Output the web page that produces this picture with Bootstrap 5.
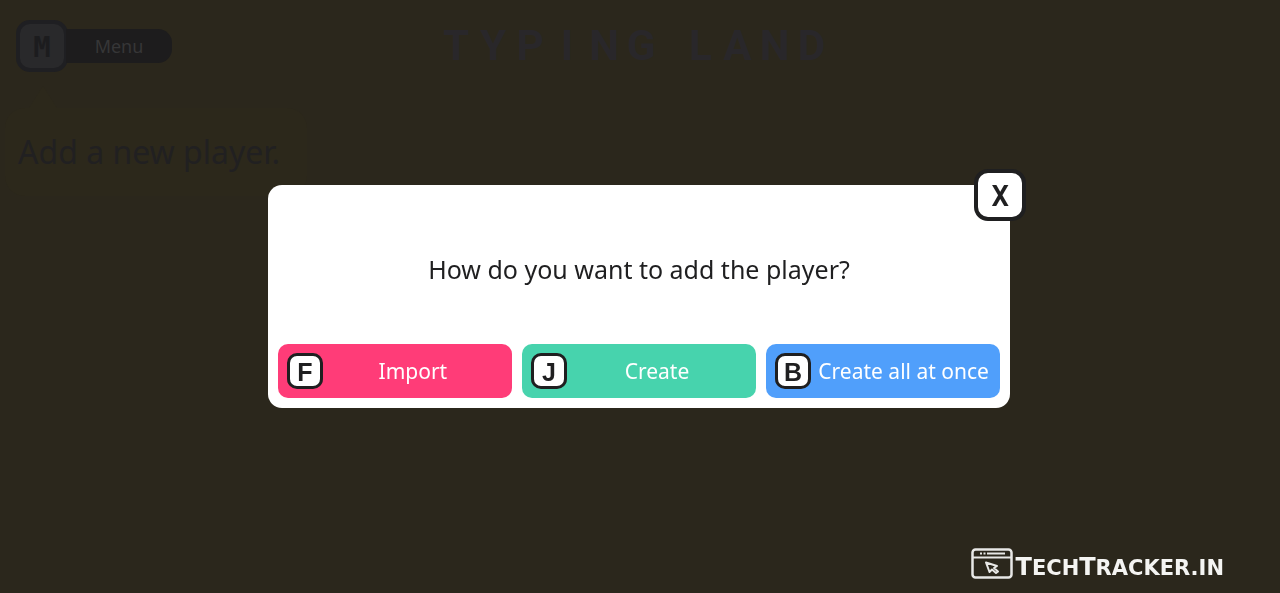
<!DOCTYPE html>
<html lang="en">
<head>
<meta charset="utf-8">
<meta name="viewport" content="width=device-width, initial-scale=1">
<title>Typing Land</title>
<link href="https://cdn.jsdelivr.net/npm/bootstrap@5.3.0/dist/css/bootstrap.min.css" rel="stylesheet">
<style>
  body { background: #2b271c; color: #1f1f20; font-family: "Noto Sans", sans-serif; min-height: 100vh; overflow: hidden; }
  .topbar { display: grid; grid-template-columns: 1fr auto 1fr; align-items: center; padding: 20px 28px 0 16px; }
  .keycap { display: inline-flex; align-items: center; justify-content: center; flex: none; width: 36px; height: 36px; padding: 2px 0 0; border: 3px solid #1f1f20; border-radius: 10px; background: #fff; color: #1f1f20; font: 700 25px/1 "Liberation Sans", sans-serif; }
  .keycap-lg { width: 52px; height: 52px; border-width: 4px; border-radius: 14px; font: 700 29px/1 "DejaVu Sans Mono", monospace; }
  .menu-btn { border: 0; padding: 0; background: none; }
  .menu-btn .keycap { background: #29292b; border-color: #1f1f22; color: #1c1c1e; }
  .menu-label { height: 34px; width: 106px; margin-left: -2px; border-radius: 0 14px 14px 0; background: #1d1c1d; color: #363637; font-size: 18px; line-height: 34px; }
  .brand { margin: 0; font: 700 42px/52px Roboto, sans-serif; color: #29272a; }
  .brand span { display: inline-block; width: 37px; text-align: center; }
  .brand .word-start { margin-left: 12px; }
  .hint { position: relative; width: 302px; margin: 36px 0 0 5px; padding: 20px 0 20px 13px; border-radius: 20px; background: #2c281b; color: #212021; font-size: 32px; line-height: 48px; }
  .hint::before { content: ""; position: absolute; left: 24px; bottom: 100%; border: 14px solid transparent; border-top: 0; border-bottom: 22px solid #2c281b; }
  .overlay { padding: 0 2px 0 0; }
  .dialog-box { width: 58vw; min-width: 720px; border-radius: 14px; background: #fff; padding: 10px; }
  .question { margin: 0; padding: 56px 0 57px; font-size: 25px; line-height: 36px; }
  .choices { display: grid; grid-template-columns: repeat(3, 1fr); gap: 10px; }
  .choice { height: 54px; border: 0; border-radius: 10px; padding: 0 9px; color: #fff; font-size: 21px; line-height: 32px; white-space: nowrap; }
  .choice-wide { padding-right: 4px; }
  .c-import { background: #ff3c78; } .c-create { background: #47d3ad; } .c-all { background: #509ffb; }
  .close-key { position: absolute; top: -16px; right: -16px; }
  .credit { position: fixed; right: 56px; bottom: 13px; gap: 2px; color: #f4f4f2; text-decoration: none; font: 700 21px/24px "DejaVu Sans", sans-serif; }
  .credit b { font-size: 24px; }
</style>
</head>
<body>
<header class="topbar">
  <button class="menu-btn d-flex align-items-center" type="button">
    <kbd class="keycap keycap-lg">M</kbd><span class="menu-label">Menu</span>
  </button>
  <h1 class="brand"><span>T</span><span>Y</span><span>P</span><span>I</span><span>N</span><span>G</span> <span class="word-start">L</span><span>A</span><span>N</span><span>D</span></h1>
</header>
<p class="hint">Add a new player.</p>

<div class="overlay position-fixed top-0 start-0 w-100 h-100 d-flex align-items-center justify-content-center">
  <section class="dialog-box position-relative" role="dialog" aria-labelledby="question">
    <button class="keycap keycap-lg close-key" type="button" aria-label="X, close">X</button>
    <h2 class="question text-center fw-normal" id="question">How do you want to add the player?</h2>
    <div class="choices">
      <button class="choice c-import d-flex align-items-center" type="button"><kbd class="keycap">F</kbd><span class="flex-fill">Import</span></button>
      <button class="choice c-create d-flex align-items-center" type="button"><kbd class="keycap">J</kbd><span class="flex-fill">Create</span></button>
      <button class="choice choice-wide c-all d-flex align-items-center" type="button"><kbd class="keycap">B</kbd><span class="flex-fill">Create all at once</span></button>
    </div>
  </section>
</div>

<a class="credit d-flex align-items-end" href="#">
  <svg width="43" height="32" viewBox="0 0 43 32" fill="none" stroke="#e8e8e6" stroke-width="2" aria-hidden="true">
    <rect x="1.500" y="1.500" width="39" height="28" rx="3" stroke-width="2.500"/><path d="M2 9.500H40"/>
    <path d="M9 5.500h2m1.500 0h2m1.500 0h18"/>
    <path d="M15 14.500l11 3.500-3 2 4 3.500-2 1.500-4-3.500-2.500 2.500z" stroke-linejoin="round"/>
  </svg>
  <span><b>T</b>ECH<b>T</b>RACKER.IN</span>
</a>
<script src="https://cdn.jsdelivr.net/npm/bootstrap@5.3.0/dist/js/bootstrap.bundle.min.js"></script>
</body>
</html>
